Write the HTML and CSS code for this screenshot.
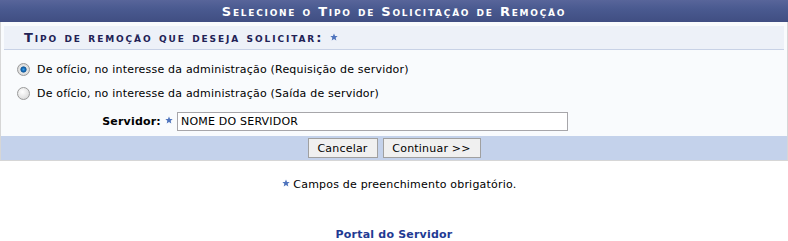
FILE: index.html
```html
<!DOCTYPE html>
<html lang="pt">
<head>
<meta charset="utf-8">
<title>Remoção</title>
<link rel="stylesheet" href="styles.css">
</head>
<body>
<div class="formbox">
  <div class="caption">Selecione o Tipo de Solicitação de Remoção</div>
  <div class="content">
    <div class="subhead">Tipo de remoção que deseja solicitar: <svg class="star" viewBox="0 0 10 10"><polygon points="5,0.5 6.3,3.6 9.6,3.8 7.1,6 7.9,9.3 5,7.5 2.1,9.3 2.9,6 0.4,3.8 3.7,3.6"/></svg></div>
    <label class="opt"><input type="radio" name="tipo" checked><span>De ofício, no interesse da administração (Requisição de servidor)</span></label>
    <label class="opt"><input type="radio" name="tipo"><span>De ofício, no interesse da administração (Saída de servidor)</span></label>
    <div class="field">
      <span class="flabel">Servidor: <svg class="star" viewBox="0 0 10 10"><polygon points="5,0.5 6.3,3.6 9.6,3.8 7.1,6 7.9,9.3 5,7.5 2.1,9.3 2.9,6 0.4,3.8 3.7,3.6"/></svg></span>
      <input class="txt" type="text" value="NOME DO SERVIDOR">
    </div>
  </div>
  <div class="footer">
    <button class="btn btn-cancel">Cancelar</button>
    <button class="btn btn-cont">Continuar &gt;&gt;</button>
  </div>
</div>
<div class="required"><svg class="star" viewBox="0 0 10 10"><polygon points="5,0.5 6.3,3.6 9.6,3.8 7.1,6 7.9,9.3 5,7.5 2.1,9.3 2.9,6 0.4,3.8 3.7,3.6"/></svg> Campos de preenchimento obrigatório.</div>
<div class="portal"><a href="#">Portal do Servidor</a></div>
</body>
</html>
```
FILE: styles.css
```css
html, body {
  margin: 0;
  padding: 0;
  background: #ffffff;
  font-family: "DejaVu Sans", Verdana, sans-serif;
  font-size: 11px;
  letter-spacing: 0.2px;
  color: #000;
}
.formbox {
  width: 786px;
  border: 1px solid #d6d6d6;
  border-top: none;
  background: #f9fbfd;
}
.caption {
  height: 22px;
  margin: 0 -1px;
  background: linear-gradient(#58659a 0%, #4a5a90 40%, #404e82 100%);
  color: #fff;
  font-weight: bold;
  font-variant: small-caps;
  font-size: 13px;
  letter-spacing: 1.75px;
  line-height: 24px;
  text-align: center;
}
.content {
  padding: 4px 3px 5px 3px;
}
.subhead {
  height: 23px;
  background: #edf1f8;
  border-bottom: 1px solid #c8d2e6;
  color: #222255;
  font-weight: bold;
  font-variant: small-caps;
  font-size: 13px;
  letter-spacing: 1.9px;
  line-height: 23px;
  padding-left: 20px;
}
.star {
  width: 8px;
  height: 8px;
  fill: #4f74bd;
  vertical-align: 1px;
}
.opt {
  display: flex;
  align-items: center;
  height: 24px;
  padding-left: 13px;
}
.opt:first-of-type {
  margin-top: 7px;
}
.opt input {
  appearance: none;
  -webkit-appearance: none;
  margin: 0 7px 0 0;
  width: 13px;
  height: 13px;
  border-radius: 50%;
  border: 1px solid #9a9a9a;
  background: radial-gradient(circle at 40% 35%, #ffffff 0%, #e6e6e6 55%, #cfcfcf 100%);
  box-sizing: border-box;
}
.opt input:checked {
  background: radial-gradient(circle at 50% 50%, #3aa0ea 0%, #0f5ea8 28%, #2b6aa0 36%, #e6e6e6 44%, #d0d0d0 100%);
}
.field {
  display: flex;
  align-items: center;
  height: 19px;
  margin-top: 7px;
}
.flabel {
  width: 173px;
  text-align: right;
  font-weight: bold;
  padding-right: 4px;
  box-sizing: border-box;
}
.txt {
  width: 391px;
  height: 19px;
  box-sizing: border-box;
  border: 1px solid #a7a6aa;
  background: #fff;
  font-family: "DejaVu Sans", Verdana, sans-serif;
  font-size: 11px;
  letter-spacing: 0.2px;
  padding: 0 3px;
  margin: 0;
  color: #000;
}
.footer {
  height: 24px;
  background: #c4d2eb;
  display: flex;
  justify-content: center;
  align-items: center;
  gap: 5px;
}
.btn {
  height: 20px;
  background: #f0f0f0;
  border: 1px solid #a0a0a0;
  border-radius: 0;
  font-family: "DejaVu Sans", Verdana, sans-serif;
  font-size: 11px;
  letter-spacing: 0.2px;
  color: #000;
  padding: 0;
  margin: 0;
}
.btn-cancel { width: 70px; }
.btn-cont { width: 98px; }
.required {
  text-align: center;
  margin-top: 17px;
  padding-left: 10px;
}
.portal {
  text-align: center;
  margin-top: 37px;
  font-weight: bold;
}
.portal a {
  color: #1f3a93;
  text-decoration: none;
}
```
